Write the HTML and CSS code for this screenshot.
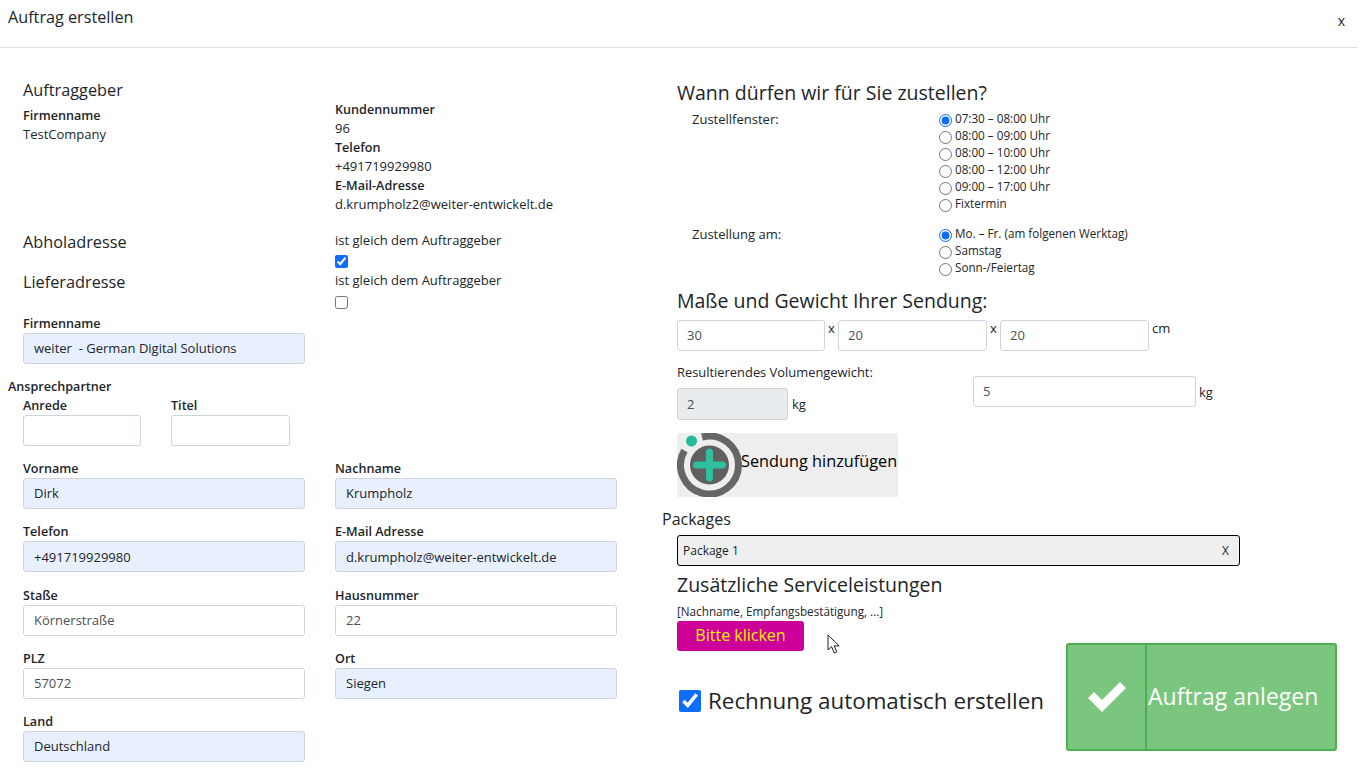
FILE: index.html
```html
<!DOCTYPE html>
<html lang="de">
<head>
  <meta charset="UTF-8" />
  <meta name="viewport" content="width=device-width, initial-scale=1.0" />
  <title>Auftrag erstellen</title>
  <link rel="stylesheet" href="styles.css">
</head>
<body>
  <header class="modal-header">
    <h1>Auftrag erstellen</h1>
    <span class="close">x</span>
  </header>

  <main class="modal-body">
    <section class="left">
      <div class="row customer">
        <div>
          <h2 class="section-title">Auftraggeber</h2>
          <div class="info">
            <b>Firmenname</b>
            <span>TestCompany</span>
          </div>
        </div>
        <div class="info info-right">
          <b>Kundennummer</b>
          <span>96</span>
          <b>Telefon</b>
          <span>+491719929980</span>
          <b>E-Mail-Adresse</b>
          <span>d.krumpholz2@weiter-entwickelt.de</span>
        </div>
      </div>

      <div class="row same pickup">
        <h2 class="section-title">Abholadresse</h2>
        <div class="same-box">
          <span class="same-text">ist gleich dem Auftraggeber</span>
          <input type="checkbox" class="check" checked>
        </div>
      </div>
      <div class="row same delivery">
        <h2 class="section-title">Lieferadresse</h2>
        <div class="same-box">
          <span class="same-text">ist gleich dem Auftraggeber</span>
          <input type="checkbox" class="check">
        </div>
      </div>

      <div class="row">
        <div class="field">
          <label>Firmenname</label>
          <input class="filled" type="text" value="weiter  - German Digital Solutions">
        </div>
      </div>

      <div class="contact-title">Ansprechpartner</div>
      <div class="salutation">
        <div class="field">
          <label>Anrede</label>
          <input type="text">
        </div>
        <div class="field">
          <label>Titel</label>
          <input type="text">
        </div>
      </div>

      <div class="row">
        <div class="field">
          <label>Vorname</label>
          <input class="filled" type="text" value="Dirk">
        </div>
        <div class="field">
          <label>Nachname</label>
          <input class="filled" type="text" value="Krumpholz">
        </div>
      </div>
      <div class="row">
        <div class="field">
          <label>Telefon</label>
          <input class="filled" type="text" value="+491719929980">
        </div>
        <div class="field">
          <label>E-Mail Adresse</label>
          <input class="filled" type="text" value="d.krumpholz@weiter-entwickelt.de">
        </div>
      </div>
      <div class="row">
        <div class="field">
          <label>Staße</label>
          <input type="text" value="Körnerstraße">
        </div>
        <div class="field">
          <label>Hausnummer</label>
          <input type="text" value="22">
        </div>
      </div>
      <div class="row">
        <div class="field">
          <label>PLZ</label>
          <input type="text" value="57072">
        </div>
        <div class="field">
          <label>Ort</label>
          <input class="filled" type="text" value="Siegen">
        </div>
      </div>
      <div class="row">
        <div class="field">
          <label>Land</label>
          <input class="filled" type="text" value="Deutschland">
        </div>
      </div>
    </section>

    <section class="right">
      <h2 class="big-title">Wann dürfen wir für Sie zustellen?</h2>
      <div class="delivery-row">
        <div class="delivery-label">Zustellfenster:</div>
        <div class="options">
          <label><input type="radio" name="window" checked>07:30 – 08:00 Uhr</label>
          <label><input type="radio" name="window">08:00 – 09:00 Uhr</label>
          <label><input type="radio" name="window">08:00 – 10:00 Uhr</label>
          <label><input type="radio" name="window">08:00 – 12:00 Uhr</label>
          <label><input type="radio" name="window">09:00 – 17:00 Uhr</label>
          <label><input type="radio" name="window">Fixtermin</label>
        </div>
      </div>
      <div class="delivery-row">
        <div class="delivery-label">Zustellung am:</div>
        <div class="options">
          <label><input type="radio" name="day" checked>Mo. – Fr. (am folgenen Werktag)</label>
          <label><input type="radio" name="day">Samstag</label>
          <label><input type="radio" name="day">Sonn-/Feiertag</label>
        </div>
      </div>

      <h2 class="big-title measure-title">Maße und Gewicht Ihrer Sendung:</h2>
      <div class="sizes">
        <input type="text" value="30">
        <span>x</span>
        <input type="text" value="20">
        <span>x</span>
        <input type="text" value="20">
        <span>cm</span>
      </div>
      <div class="weights">
        <div class="volume">
          <div class="volume-label">Resultierendes Volumengewicht:</div>
          <div class="unit-row">
            <input type="text" value="2" disabled>
            <span>kg</span>
          </div>
        </div>
        <div class="unit-row weight">
          <input type="text" value="5">
          <span>kg</span>
        </div>
      </div>

      <button class="add-btn" type="button">
        <svg width="65" height="64" viewBox="0 0 65 64">
          <path d="M7.400 17.500A29 29 0 1 0 25 4" fill="none" stroke="#666" stroke-width="7"/>
          <circle cx="14.500" cy="8" r="5.500" fill="#26b99a"/>
          <circle cx="32.500" cy="32" r="19.500" fill="#5f5f5f"/>
          <path d="M32.500 19v26M19.500 32h26" stroke="#2fbf9f" stroke-width="7" stroke-linecap="round"/>
        </svg>
        <span>Sendung hinzufügen</span>
      </button>

      <div class="packages-title">Packages</div>
      <div class="package">
        <span>Package 1</span>
        <span class="package-x">X</span>
      </div>

      <div class="bottom">
        <div>
          <h3 class="service-title">Zusätzliche Serviceleistungen</h3>
          <div class="service-hint">[Nachname, Empfangsbestätigung, ...]</div>
          <div class="service-action">
            <button class="click-btn" type="button">Bitte klicken</button>
            <svg class="pointer" width="14" height="21" viewBox="0 0 14 21">
              <path d="M1 1v15l3.600-3.300 2.600 6.300 2.600-1.100-2.600-6h5z" fill="#fff" stroke="#222" stroke-width="1"/>
            </svg>
          </div>
          <label class="invoice">
            <input type="checkbox" checked>
            <span>Rechnung automatisch erstellen</span>
          </label>
        </div>
        <button class="submit-btn" type="button">
          <span class="submit-icon">
            <svg width="40" height="34" viewBox="0 0 40 34">
              <path d="M1 18l6-6 8 8L33 2l6 6-24 24z" fill="#fff"/>
            </svg>
          </span>
          <span class="submit-text">Auftrag anlegen</span>
        </button>
      </div>
    </section>
  </main>
</body>
</html>
```

FILE: styles.css
```css
* {
  box-sizing: border-box;
}
body {
  font-family: "Open Sans", sans-serif;
  font-size: 13px;
  color: #212529;
  background: #fff;
  margin: 0;
  padding: 0;
  height: 769px;
  overflow: hidden;
}
input[type="text"] {
  font-family: "Open Sans", sans-serif;
  font-size: 13px;
  color: #495057;
  background: #fff;
  border: 1px solid #ced4da;
  border-radius: 3px;
  padding: 0 9px 1px;
  width: 100%;
  outline: none;
}
input[type="checkbox"],
input[type="radio"] {
  accent-color: #0d6efd;
  margin: 0;
}

/* header */
.modal-header {
  width: 1358px;
  height: 48px;
  border-bottom: 1px solid #dee2e6;
  display: flex;
  justify-content: space-between;
  padding: 6px 13px 0 8px;
}
.modal-header h1 {
  font-size: 16.2px;
  font-weight: 400;
  line-height: 22px;
  margin: 0;
}
.close {
  font-size: 14px;
  line-height: 20px;
  margin-top: 5px;
}

.modal-body {
  display: flex;
}

/* left part */
.left {
  width: 677px;
  padding: 31px 60px 0 23px;
}
.row {
  display: grid;
  grid-template-columns: 282px 282px;
  column-gap: 30px;
}
.section-title {
  font-size: 16.3px;
  font-weight: 400;
  line-height: 22px;
  margin: 0;
}
.info {
  display: flex;
  flex-direction: column;
  line-height: 19px;
  font-size: 13px;
  margin-top: 5px;
}
.info b {
  font-size: 12.6px;
  font-weight: 600;
}
.info-right {
  margin-top: 21px;
}
.customer {
  height: 151px;
}
.same {
  height: 40px;
}
.delivery {
  height: 43px;
}
.same .section-title {
  margin-top: 1px;
}
.same-box {
  padding-top: 1px;
}
.same-text {
  display: block;
  font-size: 13px;
  line-height: 19px;
}
.check {
  display: block;
  width: 13px;
  height: 13px;
  margin-top: 5px !important;
}
.delivery .check {
  margin-top: 6px !important;
}
.field label {
  display: block;
  height: 20px;
  padding-top: 1px;
  font-size: 12.6px;
  font-weight: 600;
  line-height: 19px;
}
.field input {
  display: block;
  height: 31px;
  margin-bottom: 12.25px;
  padding-left: 10px;
  padding-bottom: 0.5px;
}
.field .filled {
  background: #e8f0fe;
  color: #212529;
}
.contact-title {
  height: 20px;
  padding-top: 1px;
  font-size: 12.6px;
  font-weight: 600;
  line-height: 19px;
  margin-left: -15px;
}
.salutation {
  display: grid;
  grid-template-columns: 118px 119px;
  column-gap: 30px;
  margin: -1.25px 0 -0.25px;
}

/* right part */
.right {
  width: 689px;
  padding-top: 31px;
}
.big-title {
  font-size: 19.5px;
  font-weight: 400;
  line-height: 28px;
  margin: 0;
}
.delivery-row {
  display: flex;
  padding-left: 15px;
  margin-bottom: 13px;
}
.delivery-row:first-of-type {
  margin-top: 3px;
}
.delivery-label {
  width: 247px;
  font-size: 13px;
  line-height: 18px;
}
.options {
  display: flex;
  flex-direction: column;
  font-size: 11.7px;
  line-height: 17px;
}
.options label {
  display: flex;
  align-items: flex-start;
  gap: 3px;
  height: 17px;
}
.options input {
  width: 13px;
  height: 13px;
  margin-top: 4px;
}
.measure-title {
  margin-top: -2px;
}
.sizes {
  display: flex;
  align-items: flex-start;
  margin-top: 5px;
  height: 31px;
}
.sizes input {
  width: 149px;
  height: 31px;
}
.sizes input:first-child {
  width: 148px;
}
.sizes span {
  font-size: 13px;
  line-height: 17px;
  width: 13px;
  text-align: center;
}
.sizes span:last-child {
  width: auto;
  margin-left: 3px;
}
.weights {
  display: flex;
  margin-top: 12px;
}
.volume {
  width: 296px;
}
.volume-label {
  font-size: 12.9px;
  line-height: 18px;
  margin-bottom: 7px;
}
.unit-row {
  display: flex;
  align-items: center;
  gap: 4px;
  font-size: 13px;
}
.volume input {
  width: 111px;
  height: 32px;
  background: #e9ecef;
}
.weight {
  align-self: flex-start;
  gap: 3px;
  margin-top: 13px;
}
.weight input {
  width: 223px;
  height: 31px;
}
.add-btn {
  display: flex;
  align-items: center;
  width: 221px;
  height: 64px;
  margin-top: 13px;
  padding: 0;
  border: none;
  background: #eee;
  color: #000;
  font-family: "Open Sans", sans-serif;
  font-size: 16.3px;
  font-weight: 500;
  white-space: nowrap;
}
.add-btn svg {
  flex: none;
  margin-right: -1px;
}
.add-btn span {
  margin-bottom: 8px;
}
.packages-title {
  font-size: 16px;
  line-height: 22px;
  margin: 11px 0 0 -15px;
}
.package {
  display: flex;
  justify-content: space-between;
  align-items: center;
  width: 563px;
  height: 31px;
  margin-top: 5px;
  padding: 0 10px 0 5px;
  background: #efefef;
  border: 1px solid #000;
  border-radius: 3px;
  font-size: 12px;
}
.bottom {
  display: flex;
  margin-top: 6px;
}
.bottom > div {
  width: 389px;
}
.service-title {
  font-size: 19.5px;
  font-weight: 400;
  line-height: 26px;
  margin: 0;
}
.service-hint {
  font-size: 11.7px;
  line-height: 16px;
  margin-top: 5px;
}
.service-action {
  display: flex;
  margin-top: 2px;
}
.click-btn {
  width: 127px;
  height: 30px;
  padding: 0 0 2px;
  border: none;
  border-radius: 3px;
  background: #cc0099;
  color: #ffee00;
  font-family: "Open Sans", sans-serif;
  font-size: 16px;
}
.pointer {
  margin: 13px 0 0 23px;
}
.invoice {
  display: flex;
  align-items: center;
  gap: 7px;
  margin: 31px 0 0 2px;
  font-size: 22.4px;
  line-height: 30px;
  white-space: nowrap;
}
.invoice input {
  width: 22px;
  height: 22px;
}
.submit-btn {
  display: flex;
  width: 271px;
  height: 108px;
  margin-top: 71px;
  padding: 0;
  background: #7bc67e;
  border: 2px solid #4caf50;
  border-radius: 3px;
  color: #fff;
  font-family: "Open Sans", sans-serif;
}
.submit-icon {
  display: flex;
  align-items: center;
  justify-content: center;
  width: 79px;
  height: 100%;
  border-right: 2px solid #4caf50;
}
.submit-text {
  font-size: 23px;
  line-height: 30px;
  margin: 36px 0 0 1px;
  white-space: nowrap;
}
```
